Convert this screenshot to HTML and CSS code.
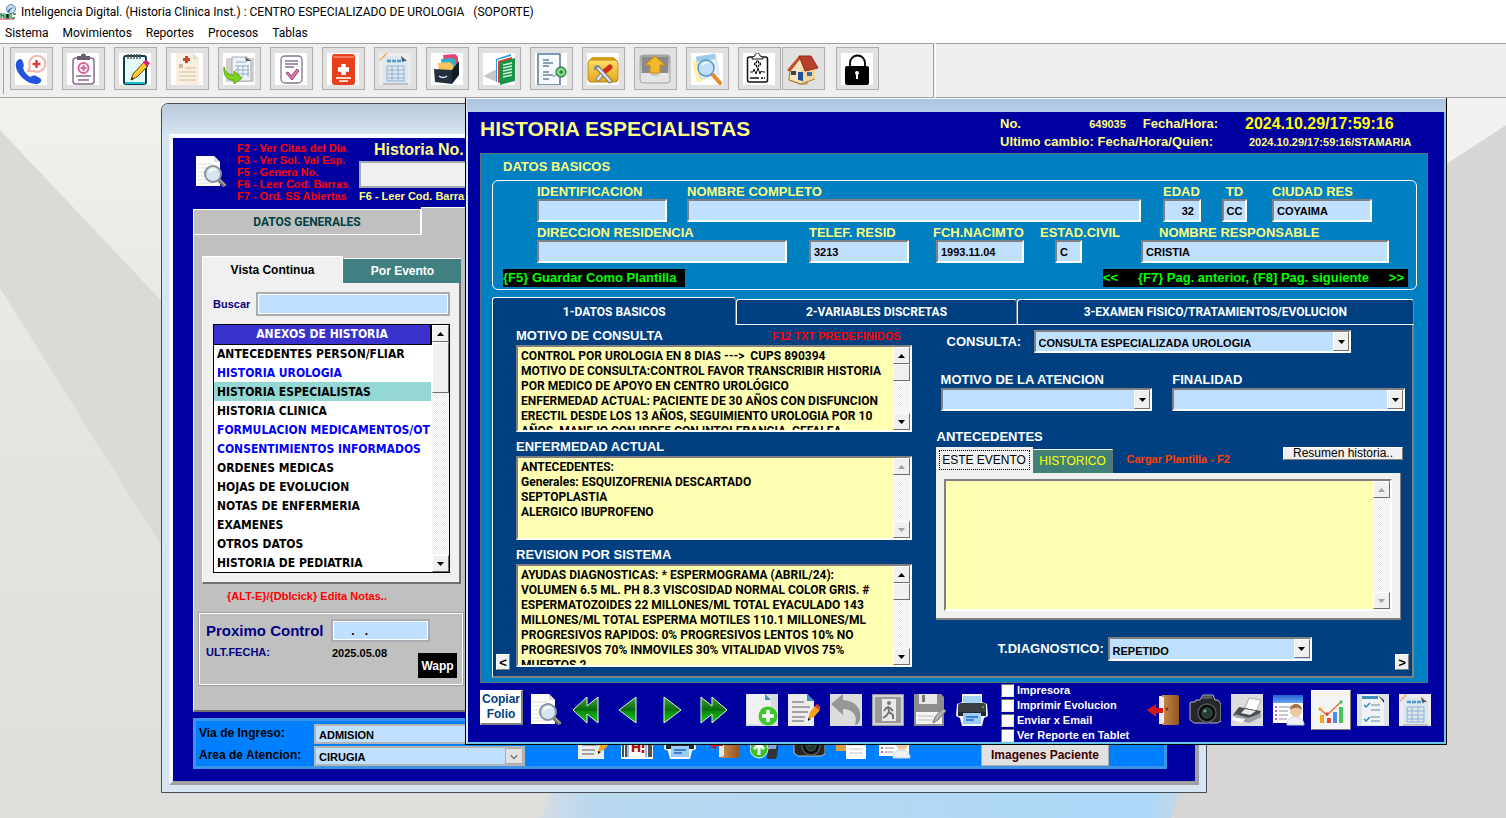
FILE: index.html
```html
<!DOCTYPE html>
<html lang="es">
<head>
<meta charset="utf-8">
<title>Inteligencia Digital</title>
<link rel="stylesheet" href="styles.css">
</head>
<body>
<svg width="0" height="0" class="defs" aria-hidden="true">
  <defs>
    <linearGradient id="gGreen" x1="0" y1="0" x2="0" y2="1"><stop offset="0" stop-color="#3fa53f"/><stop offset=".5" stop-color="#0a6a0a"/><stop offset=".55" stop-color="#0c8a0c"/><stop offset="1" stop-color="#12d012"/></linearGradient>
    <linearGradient id="gGold" x1="0" y1="0" x2="0" y2="1"><stop offset="0" stop-color="#ffe066"/><stop offset="1" stop-color="#e0a51a"/></linearGradient>
    <linearGradient id="gSilver" x1="0" y1="0" x2="0" y2="1"><stop offset="0" stop-color="#a2a2a2"/><stop offset="1" stop-color="#dadada"/></linearGradient>
    <linearGradient id="gBlue" x1="0" y1="0" x2="0" y2="1"><stop offset="0" stop-color="#1f5fd0"/><stop offset="1" stop-color="#6aa5f5"/></linearGradient>
    <linearGradient id="gDoor" x1="0" y1="0" x2="1" y2="0"><stop offset="0" stop-color="#c98a4e"/><stop offset="1" stop-color="#94561f"/></linearGradient>
  </defs>
  <symbol id="i-up" viewBox="0 0 7 4"><path d="M0 4 3.500 0 7 4z" fill="currentColor"/></symbol>
  <symbol id="i-down" viewBox="0 0 7 4"><path d="M0 0h7L3.500 4z" fill="currentColor"/></symbol>
  <symbol id="i-chev" viewBox="0 0 10 6"><path d="M1 1l4 4 4-4" fill="none" stroke="#555" stroke-width="1.300"/></symbol>
  <symbol id="i-lens" viewBox="0 0 32 32"><path d="M1 0h18l6 6v24H1z" fill="#fff"/><path d="M19 0v6h6z" fill="#dcdcdc"/><path d="M3 8h15M3 12h10M3 16h8M3 20h7M3 24h9M3 27h14" stroke="#ddd"/><path d="M23 23l7 7" stroke="#777" stroke-width="4"/><path d="M24 23l7 7" stroke="#bbb" stroke-width="1"/><circle cx="18" cy="18" r="8" fill="#cfe0f2" fill-opacity=".85" stroke="#8a9199" stroke-width="2"/><path d="M13 17c1-4 6-6 9-3-4 0-6 1-9 3z" fill="#fff"/></symbol>
  <symbol id="i-phone" viewBox="0 0 32 32"><path d="M3 7c2-2 4-1 5 2s1 4 0 6c1 4 4 7 7 9 2-1 4-2 6-1l4 2c3 3 0 6-4 6C10 31-1 18 1 10c0-1 1-2 2-3z" fill="#2453dd"/><path d="M13 18l2-4a8 8 0 1 1 4 4z" fill="#fff" stroke="#f2b5b5" stroke-width="2"/><path d="M21.500 7v8M17.500 11h8" stroke="#e23b3b" stroke-width="2.500"/></symbol>
  <symbol id="i-clip" viewBox="0 0 32 32"><rect x="6" y="5" width="21" height="26" rx="3" fill="#fff" stroke="#876a8c" stroke-width="1.500"/><path d="M10 3h4a2 2 0 0 1 5 0h4v4H10z" fill="#6b5b73"/><circle cx="16.500" cy="15" r="5" fill="#fff" stroke="#d8629c" stroke-width="2"/><path d="M16.500 12v6M13.500 15h6" stroke="#d8629c" stroke-width="2"/><path d="M9 23h15M11 27h11" stroke="#876a8c" stroke-width="1.500"/></symbol>
  <symbol id="i-note" viewBox="0 0 32 32"><rect x="5" y="3" width="22" height="28" rx="2" fill="#e8fbfb" stroke="#0b3e4a" stroke-width="2"/><path d="M6 30h20" stroke="#22b8cf" stroke-width="2"/><path d="M9 1v5M12 1v5M15 1v5M18 1v5M21 1v5" stroke="#555" stroke-width="1.500"/><path d="M12 27l2-6L25 9l4 4-11 11z" fill="#ffc928" stroke="#5b4a12"/><path d="M24 9l3-2 4 3-3 4z" fill="#e5147e"/><path d="M12 27l1-3 2 2z" fill="#222"/></symbol>
  <symbol id="i-med" viewBox="0 0 32 32"><path d="M5 0h17l6 6v26H5z" fill="#f9efe3"/><path d="M22 0v6h6z" fill="#ead9c6"/><path d="M15.500 3v7M12 6.500h7" stroke="#d4412a" stroke-width="3"/><path d="M8 13h4" stroke="#d8b795" stroke-width="4"/><path d="M14 15h11M8 19h17M8 23h17M8 27h17" stroke="#e3cbb0" stroke-width="1.300"/></symbol>
  <symbol id="i-sheet" viewBox="0 0 32 32"><path d="M0 0h32v32H0z" fill="#ececec"/><path d="M4 3h19l6 5v22H4z" fill="#dfe6ec"/><path d="M4 30h25v2H4z" fill="#c2c2c2"/><path d="M8 8h17" stroke="#4b9bcb" stroke-width="2.500" stroke-dasharray="4 1"/><path d="M8 13h17M8 17h17M8 21h17M8 25h17M8 13v15M13 13v15M19 13v15M25 13v15M8 28h17" stroke="#8fb2d4" fill="none"/><path d="M22 3l6 5h-5z" fill="#50555c"/><path d="M1 7l7-7" stroke="#e0a85c" stroke-width="2" stroke-dasharray="2 1"/></symbol>
  <symbol id="i-import" viewBox="0 0 32 32"><path d="M3 5h28v24H3z" fill="#d0d0d0"/><path d="M9 4h15l4 4v20H9z" fill="#f0f3f6" stroke="#aaa"/><path d="M13 9h11M12 13h14M12 17h14M12 21h14M15 12v12M20 12v12M25 12v12" stroke="#91adc9"/><path d="M22 4l6 4h-5z" fill="#555"/><path d="M1 14c2 7 6 8 10 8v-4l8 7-8 6v-4C5 28 0 23 1 14z" fill="#7ed321" stroke="#5aa80f"/></symbol>
  <symbol id="i-check" viewBox="0 0 32 32"><rect x="6" y="3" width="21" height="27" rx="4" fill="#fff" stroke="#8a7291" stroke-width="1.300"/><path d="M10 8h13M10 11h13M10 14h9" stroke="#8a7291" stroke-width="1.300"/><path d="M11 20l2-1 3 4 6-7 2 2-7 9z" fill="#e074ae" stroke="#8a4873"/></symbol>
  <symbol id="i-book" viewBox="0 0 32 32"><rect x="5" y="1" width="23" height="31" rx="3" fill="#e8401f"/><path d="M6 4h21" stroke="#f8b4a4"/><path d="M16.500 11v11M11 16.500h11" stroke="#fff" stroke-width="4.500"/><path d="M9 25h15M12 28h9" stroke="#fff" stroke-width="1.500"/></symbol>
  <symbol id="i-files" viewBox="0 0 32 32"><path d="M12 2l12-1 3 3v12l-13 2z" fill="#e84270"/><path d="M10 6l12-1 3 3v10l-13 3z" fill="#26b3c9"/><path d="M7 10l12-1 3 3v8L8 22z" fill="#f7c35f"/><path d="M3 16l18 1v14L4 29z" fill="#22303d"/><path d="M21 17l7-9v14l-7 9z" fill="#121b25"/><path d="M8 23c2 2 6 2 8 0" stroke="#ddd" stroke-width="1.500" fill="none"/></symbol>
  <symbol id="i-folders" viewBox="0 0 32 32"><path d="M0 23l14-7v13z" fill="#c7c7c7"/><path d="M13 6l15-5v22l-15 6z" fill="#2d9fe0"/><path d="M14 7l14-4v22l-14 5z" fill="#fff"/><path d="M15 8l14-4v22l-14 4z" fill="#ea3a2f"/><path d="M17 9l15-4v23l-15 4z" fill="#159447"/><path d="M20 12l9-2M20 15l9-2M20 18l9-2M20 21l9-2M20 24l9-2" stroke="#d5f3dc" stroke-width="1.500"/></symbol>
  <symbol id="i-report" viewBox="0 0 32 32"><path d="M3 1h22v31H3z" fill="#f6faff" stroke="#55789c" stroke-width="1.500"/><path d="M8 7h6M8 10h10M8 13h6M8 19h6M8 22h10M8 26h6" stroke="#6d8295" stroke-width="1.500"/><path d="M18 24l4-3" stroke="#55789c"/><circle cx="26" cy="19" r="5" fill="#7ad97a" stroke="#3a7e5c" stroke-width="1.300"/><circle cx="26" cy="19" r="1.500" fill="#2d6b52"/></symbol>
  <symbol id="i-tools" viewBox="0 0 32 32"><path d="M3 8q0-4 4-4h18q4 0 4 4z" fill="#d9a018"/><rect x="1" y="7" width="30" height="22" rx="3" fill="url(#gGold)" stroke="#b98712"/><path d="M11 26l5-6" stroke="#8a8a8a" stroke-width="4.500" stroke-linecap="round"/><path d="M11 26l5-6" stroke="#e2e2e2" stroke-width="2.500" stroke-linecap="round"/><path d="M17 19l6-5" stroke="#d3281f" stroke-width="5" stroke-linecap="round"/><path d="M11 15l12 13" stroke="#777" stroke-width="4.500" stroke-linecap="round"/><path d="M11 15l12 13" stroke="#dfe1e3" stroke-width="2.500" stroke-linecap="round"/><path d="M8 17c-1-3 2-5 4-3" fill="none" stroke="#888" stroke-width="2"/></symbol>
  <symbol id="i-upload" viewBox="0 0 32 32"><rect x="1" y="2" width="30" height="28" rx="3" fill="url(#gSilver)" stroke="#aaa"/><rect x="3" y="4" width="26" height="16" fill="#8a8a8a"/><path d="M2 20h10v3h8v-3h10v9H2z" fill="#e4e4e4"/><path d="M16 3l10 9h-5v8H11v-8H6z" fill="#f5b72a" stroke="#c98a13"/></symbol>
  <symbol id="i-find" viewBox="0 0 32 32"><path d="M1 8l13-4 5 20-13 6z" fill="#fff2a8"/><path d="M5 4l19-3 4 20-18 5z" fill="#e8f2fb" stroke="#c5d8e8"/><path d="M5 4l19-3 1 5-19 3z" fill="#9ccbe9"/><path d="M22 22l7 8" stroke="#e38a29" stroke-width="4" stroke-linecap="round"/><circle cx="15" cy="15" r="8" fill="#bfe0f8" stroke="#5b93c5" stroke-width="1.500"/><path d="M10 13c2-4 6-5 9-3-4 0-6 1-9 3z" fill="#fff"/></symbol>
  <symbol id="i-vital" viewBox="0 0 32 32"><rect x="4.500" y="4" width="20" height="25" rx="2" fill="#fff" stroke="#111" stroke-width="1.500"/><path d="M9 6c0-2 2-3 3-3 0-4 5-4 5 0 1 0 3 1 3 3z" fill="#fff" stroke="#111"/><path d="M13.500 8h2v2h2v2h-2v2h-2v-2h-2v-2h2z" fill="#fff" stroke="#111"/><path d="M7 19h3l1-3 2 5 2-6 2 6 1-3 2 1h2" fill="none" stroke="#111"/><path d="M7 25h9M18 25h2M21 25h1" stroke="#111" stroke-width="1.500"/></symbol>
  <symbol id="i-home" viewBox="0 0 32 32"><path d="M3 17L13 5l7 12v14l-7 0L2 27z" fill="#f9e3bd" stroke="#a87440"/><path d="M14 17l14-3v12l-14 5z" fill="#f0d3a0"/><path d="M0 17L12 3l2 2L3 19z" fill="#c2502a"/><path d="M12 3l12 0 7 12-13 3z" fill="#b9412a" stroke="#8f2e1b"/><path d="M4 18h5v4H4z" fill="#345"/><path d="M11 19h5v9l-5-1z" fill="#1f4f96"/><path d="M20 19h5v4h-5z" fill="#3c6d9a"/><path d="M2 27l12 4 14-5" stroke="#a1843c" fill="none"/></symbol>
  <symbol id="i-lock" viewBox="0 0 32 32"><path d="M9 14V10a7.500 7.500 0 0 1 15 0v4" fill="none" stroke="#000" stroke-width="1.800"/><rect x="4" y="13" width="24" height="19" rx="2"/><circle cx="16" cy="20" r="2" fill="#fff"/><path d="M16 20v6" stroke="#fff" stroke-width="2"/></symbol>
  <symbol id="i-first" viewBox="0 0 32 32"><path d="M1 16L15 3v9l11-9v26l-11-9v9z" fill="url(#gGreen)" stroke="#dff5df" stroke-width="1"/></symbol>
  <symbol id="i-prev" viewBox="0 0 32 32"><path d="M5 16L22 3v26z" fill="url(#gGreen)" stroke="#dff5df" stroke-width="1"/></symbol>
  <symbol id="i-next" viewBox="0 0 32 32"><path d="M25 16L8 3v26z" fill="url(#gGreen)" stroke="#dff5df" stroke-width="1"/></symbol>
  <symbol id="i-last" viewBox="0 0 32 32"><path d="M29 16L14 3v9L3 3v26l11-9v9z" fill="url(#gGreen)" stroke="#dff5df" stroke-width="1"/></symbol>
  <symbol id="i-add" viewBox="0 0 32 32"><path d="M0 0h32v32H0z" fill="#d8dcdd"/><path d="M1 0h18l6 6v24H1z" fill="#eff0f0"/><path d="M19 0l6 6h-6z" fill="#3c8fc0"/><circle cx="22" cy="22" r="9.500" fill="#3fc52e"/><path d="M22 16v12M16 22h12" stroke="#fff" stroke-width="3.500"/></symbol>
  <symbol id="i-edit" viewBox="0 0 32 32"><path d="M0 0h19l7 7v25H0z" fill="#ececec"/><path d="M19 0l7 7h-7z" fill="#3c8fc0"/><path d="M4 8h12M4 13h18M4 18h16M4 23h13M4 27h12" stroke="#8b8b8b" stroke-width="1.500"/><path d="M20 25l2-7 5-6 5 4-6 7z" fill="#f5a11c"/><path d="M27 12l2-2 4 3-2 3z" fill="#e3402f"/><path d="M20 27v-3l3 1z" fill="#111"/></symbol>
  <symbol id="i-undo" viewBox="0 0 32 32"><path d="M0 0h32v32H0z" fill="#dcdcdc"/><path d="M1 10L13 0v6c13 1 19 9 17 20-1 3-3 5-5 5 3-9-2-16-12-16v6z" fill="#969696"/></symbol>
  <symbol id="i-exit" viewBox="0 0 32 32"><path d="M0 0h32v32H0z" fill="#9a9a9a"/><path d="M2 2h28v28H2z" fill="none" stroke="#e5e5e5" stroke-width="1.500"/><path d="M10 5h14v22H10z" fill="#e9e9e9"/><circle cx="17" cy="9" r="2" fill="#777"/><path d="M16 12l1 6 4 3v4M17 18l-3 4-3 2M12 17l2-3 4 0 3 3" fill="none" stroke="#777" stroke-width="2"/></symbol>
  <symbol id="i-save" viewBox="0 0 32 32"><path d="M0 0h27l3 3v29H0z" fill="#8e8e8e"/><path d="M5 0h18v10H5z" fill="#e7e7e7"/><path d="M8 1h3v7H8z" fill="#777"/><path d="M2 18h26v12H2z" fill="#f5f5f5"/><path d="M4 22h15M4 26h15" stroke="#bbb"/><path d="M19 29l2-6 8-9 3 3-8 9z" fill="#b0b0b0" stroke="#777"/></symbol>
  <symbol id="i-print" viewBox="0 0 32 32"><path d="M6 0h20v8l5 2 1 12-4 2-2 8H6l-2-8-4-2 1-12 5-2z" fill="#f5f8fb"/><path d="M7 2h18v9H7z" fill="#a5d2f5"/><path d="M2 12q0-3 3-3h22q3 0 3 3v10H2z" fill="#3c4045"/><path d="M2 18h28v4H2z" fill="#26292c"/><circle cx="27" cy="13" r="1" fill="#35d05d"/><path d="M7 19h18v11H7z" fill="#9bcdf8"/><path d="M10 23h12M10 26h8" stroke="#1a68c9" stroke-width="1.500"/></symbol>
  <symbol id="i-door" viewBox="0 0 32 32"><path d="M12 2h20v28H12z" fill="#f3e9dd"/><path d="M15 1h15q2 0 2 2v26q0 2-2 2H15z" fill="url(#gDoor)"/><path d="M12 3h5v26l-5 1z" fill="#e7ebee"/><circle cx="20" cy="15" r="1.500" fill="#7e2c14"/><path d="M0 16l9-6v4h7v5H9v4z" fill="#d41616"/></symbol>
  <symbol id="i-camera" viewBox="0 0 32 32"><path d="M2 8h4l1-2h4l3-5h10l2 5h3l3 4v17l-4 2H5l-4-3V9z" fill="#25282b" stroke="#dedede" stroke-width=".8"/><path d="M13 2h10v3H13z" fill="#555"/><circle cx="18" cy="19" r="9" fill="#0b0c0d" stroke="#555" stroke-width="1.500"/><circle cx="18" cy="19" r="5" fill="#233a35" stroke="#4d5d5a"/><circle cx="16" cy="17" r="1.500" fill="#7ea39b"/></symbol>
  <symbol id="i-scan" viewBox="0 0 32 32"><path d="M0 0h32v32H0z" fill="#dcdcdc"/><path d="M14 14l4-10 12 2-5 12z" fill="#fff" stroke="#aaa"/><path d="M8 13l22 4-2 4-18 5-8-5z" fill="#4a4e52"/><path d="M14 15l11 2-6 4-9-2z" fill="#e8ebed"/><path d="M4 20l14 4 12-5v4l-12 6-14-4z" fill="#9aa0a4"/><path d="M2 23l12 2-3 4-10-3z" fill="#f8f8f8"/></symbol>
  <symbol id="i-person" viewBox="0 0 32 32"><path d="M0 1h30v28H0z" fill="#fff"/><path d="M0 1h30v8H0z" fill="url(#gBlue)"/><path d="M2 13h2M2 17h2M2 21h2M2 25h2" stroke="#c314a8" stroke-width="1.500"/><path d="M6 13h12M6 17h9M6 21h9M6 25h8" stroke="#8d8d9b"/><path d="M14 31c0-6 4-8 8-8s9 2 9 8z" fill="#eef2f6" stroke="#ccd3da"/><circle cx="23" cy="17" r="6" fill="#ecc9a4"/><path d="M17 16c0-8 12-8 12 0-3-3-8-3-12 0z" fill="#a57343"/></symbol>
  <symbol id="i-chart" viewBox="0 0 32 32"><path d="M5 21h4v8H5z" fill="#f5a623"/><path d="M12 24h4v5h-4z" fill="#e8443a"/><path d="M18 18h4v11h-4z" fill="#4a90e2"/><path d="M24 13h4v16h-4z" fill="#4cc35a"/><path d="M5 15l7 6 14-13" fill="none" stroke="#e8703a" stroke-width="1.500"/><circle cx="5" cy="15" r="1.700" fill="#f5a623"/><circle cx="12" cy="20" r="1.700" fill="#e8443a"/><circle cx="26" cy="8" r="1.700" fill="#4cc35a"/></symbol>
  <symbol id="i-list" viewBox="0 0 32 32"><path d="M0 0h32v32H0z" fill="#dde2e6"/><path d="M5 1h18l4 5v25H5z" fill="#f0f3f5"/><path d="M5 2h16v3H5z" fill="#3f8db9"/><path d="M21 1l6 5v3z" fill="#303a42"/><path d="M14 11h9M14 16h9M14 23h9M14 27h9" stroke="#8cafc6" stroke-width="1.300"/><path d="M7 11l2 2 4-4M7 25l2 2 4-4" fill="none" stroke="#2f86bb" stroke-width="1.500"/></symbol>
  <symbol id="i-bar" viewBox="0 0 32 32"><path d="M0 0h32v32H0z" fill="#fff"/><path d="M2 2v28M5 2v28M28 2v28M30 2v28" stroke="#161616" stroke-width="1.500"/><path d="M7 2v28M25 2v28" stroke="#2a72d0"/><path d="M12 14v11M18 14v11M12 20h6M22 18v3M22 23v3" stroke="#b01515" stroke-width="2.500"/></symbol>
  <symbol id="i-copy" viewBox="0 0 32 32"><path d="M0 4h22v20H0z" fill="#d8a04a"/><path d="M10 8h20v24H10z" fill="#fff"/><path d="M13 14h14M13 18h14M13 22h14M13 26h14" stroke="#bcc2c8"/></symbol>
  <symbol id="i-device" viewBox="0 0 32 32"><path d="M19 4h9q3 0 2 3l-3 22q0 3-3 3h-7z" fill="#30343a"/><path d="M20 7h8l-2 15h-8z" fill="#8ba6d9"/><circle cx="9" cy="22" r="9" fill="#39c12a" stroke="#e4f7e0"/><path d="M9 28V18M4 22l5-5 5 5" fill="none" stroke="#fff" stroke-width="3"/></symbol>
  <symbol id="i-app" viewBox="0 0 16 16"><circle cx="11" cy="5" r="4.500" fill="#c7dcee" stroke="#5b88b0"/><path d="M7 8c2-4 5-5 7-4-3 0-4 2-5 5z" fill="#2f6ba8"/><path d="M1 9v5M4 9v5M1 9l3 5M6 10v4h3v-4M11 9v5M13 10h3M12 14h3" stroke="#27804b" stroke-width="1.300"/><path d="M0 15h14" stroke="#bb3434"/></symbol>
</svg>

<header class="app-title"><svg class="app-icon"><use href="#i-app"/></svg><h1>Inteligencia Digital. (Historia Clinica Inst.) : CENTRO ESPECIALIZADO DE UROLOGIA &nbsp; (SOPORTE)</h1></header>
<nav class="menu">
  <button>Sistema</button><button>Movimientos</button><button>Reportes</button><button>Procesos</button><button>Tablas</button>
</nav>
<div class="toolbar">
  <div class="tools">
    <span class="grip"></span>
    <button class="tool" aria-label="Llamadas"><svg><use href="#i-phone"/></svg></button>
    <button class="tool" aria-label="Historia"><svg><use href="#i-clip"/></svg></button>
    <button class="tool" aria-label="Notas"><svg><use href="#i-note"/></svg></button>
    <button class="tool" aria-label="Formulas"><svg><use href="#i-med"/></svg></button>
    <button class="tool" aria-label="Importar"><svg><use href="#i-import"/></svg></button>
    <button class="tool" aria-label="Verificar"><svg><use href="#i-check"/></svg></button>
    <button class="tool" aria-label="Manual"><svg><use href="#i-book"/></svg></button>
    <button class="tool" aria-label="Planilla"><svg><use href="#i-sheet"/></svg></button>
    <button class="tool" aria-label="Archivo"><svg><use href="#i-files"/></svg></button>
    <button class="tool" aria-label="Carpetas"><svg><use href="#i-folders"/></svg></button>
    <button class="tool" aria-label="Informe"><svg><use href="#i-report"/></svg></button>
    <button class="tool" aria-label="Herramientas"><svg><use href="#i-tools"/></svg></button>
    <button class="tool plain" aria-label="Subir"><svg><use href="#i-upload"/></svg></button>
    <button class="tool" aria-label="Buscar documentos"><svg><use href="#i-find"/></svg></button>
    <span class="pair"><button class="tool" aria-label="Signos vitales"><svg><use href="#i-vital"/></svg></button><button class="tool plain" aria-label="Inicio"><svg><use href="#i-home"/></svg></button></span>
    <button class="tool" aria-label="Bloquear"><svg><use href="#i-lock"/></svg></button>
  </div>
  <div class="tools-rest"></div>
</div>

<main class="desktop">
  <svg class="wallpaper" viewBox="0 0 1506 720" preserveAspectRatio="none" aria-hidden="true">
    <defs>
      <linearGradient id="wBase" x1="0" y1="0" x2="0" y2="1"><stop offset="0" stop-color="#f2f1ee"/><stop offset=".4" stop-color="#e6e5e2"/><stop offset="1" stop-color="#e0deda"/></linearGradient>
      <linearGradient id="wBlue" x1="0" y1="0" x2="1" y2="0"><stop offset="0" stop-color="#d5dde3"/><stop offset=".08" stop-color="#b9d8ee"/><stop offset=".95" stop-color="#acd8f8"/><stop offset="1" stop-color="#c3d8e8"/></linearGradient>
    </defs>
    <path d="M0 0h1506v720H0z" fill="url(#wBase)"/>
    <path d="M0 32l170 180v250L0 190z" fill="#dcdad7"/>
    <path d="M1180 240L1506 27v693H1174z" fill="#d7d6d5"/>
    <path d="M1206 0h300v27l-300 195z" fill="#f1f1f0"/>
    <path d="M555 690h625l-8 30H540z" fill="url(#wBlue)"/>
  </svg>

  <section class="win win-back">
    <div class="win-caption tall"></div>
    <div class="back-body">
      <div class="back-head">
        <svg class="ic"><use href="#i-lens"/></svg>
        <ul class="hints"><li>F2 - Ver Citas del Dia</li><li>F3 - Ver Sol. Val Esp.</li><li>F5 - Genera No.</li><li>F6 - Leer Cod. Barras</li><li>F7 - Ord. SS Abiertas</li></ul>
        <div class="hist-no"><label for="hno">Historia No.</label><input id="hno" type="text"><span>F6 - Leer Cod. Barras</span></div>
      </div>
      <div class="gray-tabs"><button class="gray-tab">DATOS GENERALES</button><span class="gray-tab-on"></span></div>
      <div class="gray-area">
        <div class="side">
          <div class="view-tabs"><button class="view-on">Vista Continua</button><button class="view-off">Por Evento</button></div>
          <div class="view-box">
            <div class="search"><label for="bus">Buscar</label><input id="bus" type="text"></div>
            <div class="listbox">
              <table>
                <thead><tr><th>ANEXOS DE HISTORIA</th></tr></thead>
                <tbody>
                  <tr><td>ANTECEDENTES PERSON/FLIAR</td></tr>
                  <tr class="blue"><td>HISTORIA UROLOGIA</td></tr>
                  <tr class="on"><td>HISTORIA ESPECIALISTAS</td></tr>
                  <tr><td>HISTORIA CLINICA</td></tr>
                  <tr class="blue"><td>FORMULACION MEDICAMENTOS/OT</td></tr>
                  <tr class="blue"><td>CONSENTIMIENTOS INFORMADOS</td></tr>
                  <tr><td>ORDENES MEDICAS</td></tr>
                  <tr><td>HOJAS DE EVOLUCION</td></tr>
                  <tr><td>NOTAS DE ENFERMERIA</td></tr>
                  <tr><td>EXAMENES</td></tr>
                  <tr><td>OTROS DATOS</td></tr>
                  <tr><td>HISTORIA DE PEDIATRIA</td></tr>
                </tbody>
              </table>
              <div class="scroll"><button aria-label="Subir lista"><svg><use href="#i-up"/></svg></button><i class="thumb long"></i><button class="end" aria-label="Bajar lista"><svg><use href="#i-down"/></svg></button></div>
            </div>
          </div>
          <p class="alt">{ALT-E}/{Dblcick} Edita Notas..</p>
          <div class="control">
            <div class="control-row"><label for="prox">Proximo Control</label><input id="prox" type="text" value="&nbsp;&nbsp;&nbsp;&nbsp;.&nbsp;&nbsp;&nbsp;."></div>
            <div class="control-row low"><span class="ult">ULT.FECHA:</span><span class="fecha">2025.05.08</span><button class="wapp">Wapp</button></div>
          </div>
        </div>
      </div>
      <div class="ingreso">
        <div class="in-row"><label for="via">Via de Ingreso:</label><select id="via" class="in-sel wide"><option>ADMISION</option></select></div>
        <div class="in-row"><label for="area">Area de Atencion:</label><span class="in-combo"><select id="area" class="in-sel"><option>CIRUGIA</option></select><span class="chev"><svg><use href="#i-chev"/></svg></span></span>
          <span class="in-icons"><svg><use href="#i-edit"/></svg><svg><use href="#i-bar"/></svg><svg><use href="#i-print"/></svg><svg><use href="#i-door"/></svg><svg><use href="#i-device"/></svg><svg><use href="#i-camera"/></svg><svg><use href="#i-copy"/></svg><svg><use href="#i-person"/></svg></span>
          <button class="imagenes">Imagenes Paciente</button></div>
      </div>
    </div>
  </section>

  <section class="win-front">
    <div class="win-caption"></div>
    <div class="front-body">
      <div class="front-head">
        <h2>HISTORIA ESPECIALISTAS</h2>
        <div class="meta">
          <div class="meta-row"><span>No.</span><small>649035</small><span>Fecha/Hora:</span></div><strong>2024.10.29/17:59:16</strong>
          <span>Ultimo cambio: Fecha/Hora/Quien:</span><small class="who">2024.10.29/17:59:16/STAMARIA</small>
        </div>
      </div>

      <div class="panel">
        <h3>DATOS BASICOS</h3>
        <div class="basic">
          <div class="frow">
            <div class="f w130"><label for="ide">IDENTIFICACION</label><input id="ide" type="text"></div>
            <div class="f grow"><label for="nom">NOMBRE COMPLETO</label><input id="nom" type="text"></div>
            <div class="f w38"><label for="eda">EDAD</label><input id="eda" class="num" type="text" value="32"></div>
            <div class="f w25"><label for="td" class="mid">TD</label><input id="td" class="tight" type="text" value="CC"></div>
            <div class="f w100 city"><label for="ciu">CIUDAD RES</label><input id="ciu" type="text" value="COYAIMA"></div>
          </div>
          <div class="frow second">
            <div class="f w250"><label for="dir">DIRECCION RESIDENCIA</label><input id="dir" type="text"></div>
            <div class="f w100"><label for="tel">TELEF. RESID</label><input id="tel" type="text" value="3213"></div>
            <div class="f w91"><label for="fch">FCH.NACIMTO</label><input id="fch" type="text" value="1993.11.04"></div>
            <div class="f w80"><label for="est">ESTAD.CIVIL</label><input id="est" type="text" value="C"></div>
            <div class="f grow resp"><label for="res">NOMBRE RESPONSABLE</label><input id="res" type="text" value="CRISTIA"></div>
          </div>
          <div class="keys"><button>{F5} Guardar Como Plantilla</button><span class="pager"><button>&lt;&lt;</button><span>{F7} Pag. anterior, {F8] Pag. siguiente</span><button>&gt;&gt;</button></span></div>
        </div>

        <div class="tabs"><button class="tab on">1-DATOS BASICOS</button><button class="tab">2-VARIABLES DISCRETAS</button><button class="tab third">3-EXAMEN FISICO/TRATAMIENTOS/EVOLUCION</button></div>
        <div class="page">
          <button class="turn">&lt;</button>
          <div class="left">
            <div class="memo-group">
              <div class="memo-head"><label for="mot">MOTIVO DE CONSULTA</label><em>F12 TXT PREDEFINIDOS</em></div>
              <div class="memo m1"><textarea id="mot" wrap="off">CONTROL POR UROLOGIA EN 8 DIAS ---&gt;  CUPS 890394
MOTIVO DE CONSULTA:CONTROL FAVOR TRANSCRIBIR HISTORIA
POR MEDICO DE APOYO EN CENTRO UROLÓGICO
ENFERMEDAD ACTUAL: PACIENTE DE 30 AÑOS CON DISFUNCION
ERECTIL DESDE LOS 13 AÑOS, SEGUIMIENTO UROLOGIA POR 10
AÑOS, MANEJO CON IPDE5 CON INTOLERANCIA, CEFALEA</textarea><div class="scroll"><button aria-label="Subir"><svg><use href="#i-up"/></svg></button><i class="thumb"></i><button class="end" aria-label="Bajar"><svg><use href="#i-down"/></svg></button></div></div>
            </div>
            <div class="memo-group">
              <div class="memo-head"><label for="enf">ENFERMEDAD ACTUAL</label></div>
              <div class="memo m2"><textarea id="enf" wrap="off">ANTECEDENTES:
Generales: ESQUIZOFRENIA DESCARTADO
SEPTOPLASTIA
ALERGICO IBUPROFENO</textarea><div class="scroll off"><button disabled aria-label="Subir"><svg><use href="#i-up"/></svg></button><button class="end" disabled aria-label="Bajar"><svg><use href="#i-down"/></svg></button></div></div>
            </div>
            <div class="memo-group">
              <div class="memo-head"><label for="rev">REVISION POR SISTEMA</label></div>
              <div class="memo m3"><textarea id="rev" wrap="off">AYUDAS DIAGNOSTICAS: * ESPERMOGRAMA (ABRIL/24):
VOLUMEN 6.5 ML. PH 8.3 VISCOSIDAD NORMAL COLOR GRIS. #
ESPERMATOZOIDES 22 MILLONES/ML TOTAL EYACULADO 143
MILLONES/ML TOTAL ESPERMA MOTILES 110.1 MILLONES/ML
PROGRESIVOS RAPIDOS: 0% PROGRESIVOS LENTOS 10% NO
PROGRESIVOS 70% INMOVILES 30% VITALIDAD VIVOS 75%
MUERTOS 2</textarea><div class="scroll"><button aria-label="Subir"><svg><use href="#i-up"/></svg></button><i class="thumb"></i><button class="end" aria-label="Bajar"><svg><use href="#i-down"/></svg></button></div></div>
            </div>
          </div>
          <div class="right">
            <div class="consulta"><label for="con">CONSULTA:</label><span class="combo"><select id="con"><option>CONSULTA ESPECIALIZADA UROLOGIA</option></select><span class="drop"><svg><use href="#i-down"/></svg></span></span></div>
            <div class="two">
              <div class="c1"><label for="ate">MOTIVO DE LA ATENCION</label><span class="combo"><select id="ate"><option></option></select><span class="drop"><svg><use href="#i-down"/></svg></span></span></div>
              <div class="c2"><label for="fin">FINALIDAD</label><span class="combo"><select id="fin"><option></option></select><span class="drop"><svg><use href="#i-down"/></svg></span></span></div>
            </div>
            <label class="ante" for="ant">ANTECEDENTES</label>
            <div class="ante-tabs"><button class="at-on"><span>ESTE EVENTO</span></button><button class="at-off">HISTORICO</button><em>Cargar Plantilla - F2</em><button class="resumen">Resumen historia..</button></div>
            <div class="ante-box"><div class="memo m4"><textarea id="ant"></textarea><div class="scroll off"><button disabled aria-label="Subir"><svg><use href="#i-up"/></svg></button><button class="end" disabled aria-label="Bajar"><svg><use href="#i-down"/></svg></button></div></div></div>
            <div class="diag"><label for="dia">T.DIAGNOSTICO:</label><span class="combo"><select id="dia"><option>REPETIDO</option></select><span class="drop"><svg><use href="#i-down"/></svg></span></span><button class="turn">&gt;</button></div>
          </div>
        </div>
      </div>

      <div class="actions">
        <button class="copiar">Copiar Folio</button>
        <div class="acts nav">
          <button aria-label="Buscar"><svg><use href="#i-lens"/></svg></button><button aria-label="Primero"><svg><use href="#i-first"/></svg></button><button aria-label="Anterior"><svg><use href="#i-prev"/></svg></button><button aria-label="Siguiente"><svg><use href="#i-next"/></svg></button><button aria-label="Ultimo"><svg><use href="#i-last"/></svg></button>
        </div>
        <div class="acts doc">
          <button aria-label="Nuevo"><svg><use href="#i-add"/></svg></button><button aria-label="Editar"><svg><use href="#i-edit"/></svg></button><button aria-label="Deshacer"><svg><use href="#i-undo"/></svg></button><button aria-label="Salir"><svg><use href="#i-exit"/></svg></button><button aria-label="Guardar"><svg><use href="#i-save"/></svg></button><button aria-label="Imprimir"><svg><use href="#i-print"/></svg></button>
        </div>
        <div class="checks">
          <label><input type="checkbox">Impresora</label><label><input type="checkbox">Imprimir Evolucion</label><label><input type="checkbox">Enviar x Email</label><label><input type="checkbox">Ver Reporte en Tablet</label>
        </div>
        <div class="acts tail">
          <button aria-label="Cerrar"><svg><use href="#i-door"/></svg></button><button aria-label="Camara"><svg><use href="#i-camera"/></svg></button><button aria-label="Escanear"><svg><use href="#i-scan"/></svg></button><button aria-label="Paciente"><svg><use href="#i-person"/></svg></button><button class="raised" aria-label="Graficas"><svg><use href="#i-chart"/></svg></button><button aria-label="Lista"><svg><use href="#i-list"/></svg></button><button aria-label="Tabla"><svg><use href="#i-sheet"/></svg></button>
        </div>
      </div>
    </div>
  </section>
</main>
</body>
</html>
```

FILE: styles.css
```css
* { box-sizing: border-box; }
body { margin: 0; min-height: 100vh; display: flex; flex-direction: column; background: #fff; font: bold 12px/16px "Liberation Sans", Arial, sans-serif; color: #000; }
h1, h2, h3, p, ul { margin: 0; padding: 0; font: inherit; }
ul { list-style: none; }
button, input, select, textarea { font: inherit; color: inherit; margin: 0; padding: 0; border: 0; border-radius: 0; background: none; outline: 0; min-width: 0; }
button { white-space: nowrap; }
select { appearance: none; }
textarea { display: block; resize: none; overflow: hidden; }
em { font-style: normal; }
.defs { position: absolute; }
svg { display: block; }

/* application frame */
.app-title { display: flex; align-items: center; gap: 5px; height: 24px; font: 12px/16px Roboto, sans-serif; }
.app-icon { width: 16px; height: 16px; }
.menu { display: flex; gap: 14px; height: 19px; padding-left: 5px; font: 12px/18px Roboto, sans-serif; }
.menu button { height: 18px; }
.toolbar { display: flex; height: 55px; background: #efefef; }
.tools { display: flex; gap: 9px; padding: 3px 54px 0 3px; border: solid #a0a0a0; border-width: 1px 1px 1px 0; }
.tools-rest { flex: 1; margin-left: 1px; border: solid #a0a0a0; border-width: 1px 0 1px 1px; }
.tools-rest { border-left-color: #fff; }
.grip { width: 1px; height: 47px; margin-right: -3px; background: #a0a0a0; }
.tool { width: 43px; height: 43px; padding: 4px; background: #e1e1e1; border: 1px solid #adadad; }
.tool svg { width: 32px; height: 32px; background: #fff; }
.tool.plain svg { background: none; }
.pair { display: flex; gap: 1px; margin-right: 2px; }
.desktop { position: relative; flex: 1; min-height: 720px; overflow: hidden; }
.wallpaper { width: 100%; height: 100%; position: absolute; }

/* back window */
.win-back { position: absolute; left: 161px; right: 299px; top: 5px; padding: 0 7px 7px; border: 1px solid #444c55; border-radius: 7px 7px 0 0; background: #d7e4f2; }
.win-caption { height: 13px; background: linear-gradient(#a9c3df, #b9cfe8); }
.win-caption.tall { height: 30px; margin: 0 -7px; border-radius: 6px 6px 0 0; background: linear-gradient(#b9c9d8, #d7e4f2); }
.back-body { border: 4px solid; border-color: #fafcff #a0a0a0 #a0a0a0 #f4f7fb; padding: 0 28px 12px 20px; background: #0000a0; }
.back-head { display: flex; height: 69px; color: #ff0000; font-size: 11px; }
.ic { width: 32px; height: 32px; margin: 18px 0 0 2px; }
.hints { margin: 4px 0 0 10px; width: 122px; line-height: 12px; }
.hist-no { display: flex; flex-direction: column; color: #ffff80; }
.hist-no label { font-size: 16px; line-height: 18px; padding: 3px 0 0 15px; margin-bottom: 2px; }
.hist-no input { width: 200px; height: 27px; border: 2px solid #a0a8b8; background: #f0f0f0; }
.gray-tabs { display: flex; align-items: flex-end; height: 28px; }
.gray-tab { width: 228px; height: 26px; background: #c0c0c0; color: #004040; border: 1px solid #fff; font: bold 12px/16px Roboto, sans-serif; }
.gray-tab-on { flex: 1; height: 28px; background: #c0c0c0; border: solid #fff; border-width: 1px 0 0 1px; }
.gray-area { height: 477px; padding: 21px 0 0 5px; background: #c0c0c0; border-left: 1px solid #fff; border-bottom: 2px solid #707070; }
.side { width: 264px; }
.view-tabs { display: flex; align-items: flex-end; height: 27px; margin-left: 3px; width: 259px; }
.view-on { width: 141px; height: 27px; background: #f0f0f0; border: 1px solid #fff; border-bottom: 0; }
.view-off { flex: 1; height: 25px; background: #408080; color: #fff; border-left: 1px solid #707070; border-top: 1px solid #fff; }
.view-box { width: 259px; margin-left: 3px; padding: 9px 9px 9px 10px; background: #f0f0f0; border-right: 2px solid #707070; border-left: 1px solid #fff; border-bottom: 2px solid #707070; }
.search { display: flex; align-items: center; gap: 5px; color: #000080; font-size: 11px; }
.search label { width: 38px; }
.search input { flex: 1; height: 24px; }
.search input, .control input { background: #c0e0ff; border: 2px solid #a8adb3; box-shadow: inset 0 0 0 1px #fff; }
.listbox { display: flex; margin-top: 8px; border: 1px solid #000; background: #fff; }
.listbox table { flex: 1; width: 0; table-layout: fixed; border-collapse: collapse; font: bold 12px/18px "DejaVu Sans Condensed", "Noto Sans", sans-serif; }
.listbox th { height: 19px; padding: 0; background: #3a32cc; color: #fff; border: solid #000; border-width: 0 2px 1px 0; }
.listbox td { height: 19px; padding: 0 0 0 3px; overflow: hidden; white-space: nowrap; }
.blue { color: #0000ff; }
.on td { background: #94d8d4; }
.alt { margin: 4px 0 9px 28px; font-size: 11px; color: #ff0000; }
.control { height: 72px; padding: 5px 5px 5px 6px; border: 1px solid #fff; outline: 1px solid #a0a0a0; color: #000080; }
.control-row { display: flex; align-items: center; }
.control-row label { width: 125px; font-size: 15px; }
.control input { width: 99px; height: 23px; color: #000; padding-left: 5px; }
.low { align-items: flex-start; padding-top: 2px; font-size: 11px; }
.ult { width: 126px; line-height: 16px; }
.fecha { flex: 1; color: #000; line-height: 18px; }
.wapp { width: 39px; height: 25px; margin-top: 9px; background: #000; color: #fff; font-size: 12px; }
.ingreso { margin-top: 6px; padding: 3px; border: 3px solid #3d94e6; background: #0080ff; height: 51px; display: flex; flex-direction: column; gap: 2px; }
.in-row { display: flex; height: 20px; line-height: 18px; }
.in-row label { width: 115px; flex: none; }
.in-sel { width: 211px; height: 20px; padding: 0 3px 2px; border: 2px solid #b4b4b4; background: #c0e0ff; font-size: 11px; }
.in-combo { display: grid; width: 211px; }
.in-combo > * { grid-area: 1 / 1; }
.chev { justify-self: end; width: 18px; height: 16px; margin: 2px; padding: 5px 4px; background: #e1e1e1; border: 1px solid #adadad; pointer-events: none; }
.chev svg { width: 8px; height: 6px; }
.in-icons { display: flex; gap: 11px; margin-left: 53px; align-items: flex-end; height: 13px; }
.in-icons svg { width: 32px; height: 32px; flex: none; }
.imagenes { width: 128px; height: 22px; margin: -2px 52px 0 auto; background: #e1e1e1; border: 1px solid #adadad; color: #400000; }

/* front window */
.win-front { position: absolute; left: 465px; right: 59px; top: 0; border: solid #000; border-width: 0 1px 1px; }
.win-front .win-caption { height: 14px; border-top: 1px solid #fff; border-left: 1px solid #dce9f5; }
.front-body { padding: 0 13px 0 12px; background: #0000a0; border: solid #6cc8ea; border-width: 0 2px 2px; border-left-color: #dce9f5; }
.front-head { display: flex; justify-content: space-between; height: 41px; padding: 3px 3px 0 0; color: #ffff80; }
.front-head h2 { font-size: 21px; line-height: 28px; }
.meta { display: grid; grid-template-columns: 218px auto; grid-auto-rows: 18px; column-gap: 27px; width: 428px; font-size: 13px; line-height: 18px; white-space: nowrap; }
.meta-row { display: flex; }
.meta-row small { flex: 1; text-align: right; padding-right: 17px; }
.meta small { font-size: 11px; }
.meta strong { font-size: 16px; color: #ffff00; }
.meta .who { padding-left: 4px; }
.panel { margin-right: 3px; padding: 6px 11px 4px; background: #0080c0; border: 1px solid #5f6f7c; color: #ffff80; font-size: 13px; }
.panel h3 { line-height: 14px; margin: 0 0 6px 11px; }
.basic { height: 110px; padding: 4px 8px 0 10px; border: 1px solid #fff; border-radius: 6px; margin-right: -1px; }
.frow { display: flex; padding: 0 36px 0 34px; }
.frow.second { margin-top: 4px; padding-right: 19px; }
.f { display: flex; flex-direction: column; line-height: 14px; white-space: nowrap; }
.f input { width: 100%; height: 23px; padding: 0 3px; background: #c0e0ff; border: 2px solid; border-color: #808080 #fff #fff #808080; color: #000; font-size: 11px; }
.f .num { text-align: right; padding-right: 5px; }
.f .tight { text-align: center; padding: 0; }
.mid { text-align: center; }
.grow { flex: 1; }
.w130 { width: 130px; margin-right: 20px; }
.w38 { width: 38px; margin: 0 21px 0 22px; }
.w25 { width: 25px; margin-right: 25px; }
.w100 { width: 100px; }
.w250 { width: 250px; margin-right: 22px; }
.w91 { width: 91px; margin: 0 16px 0 24px; }
.f.w91 input { width: 88px; align-self: flex-end; }
.w80 { width: 80px; margin-right: 21px; }
.f.w80 input { width: 27px; margin-left: 15px; }
.resp label { padding-left: 18px; }
.keys { display: flex; justify-content: space-between; margin-top: 6px; color: #00ff00; line-height: 18px; }
.keys > * { background: #000; }
.keys > button { width: 182px; text-align: left; }
.pager { display: flex; justify-content: space-between; width: 305px; padding-right: 4px; white-space: nowrap; }
.tabs { display: flex; align-items: flex-end; height: 28px; margin: 7px 2px 0 0; color: #fff; }
.tab { height: 26px; flex: 280 1 0; background: #004080; border: 1px solid #fff; border-right-color: #808080; border-radius: 3px 3px 0 0; font: bold 12px/16px Roboto, sans-serif; }
.tab.on { height: 28px; flex-grow: 244; border-bottom: 0; }
.tab.third { flex-grow: 398; }
.page { display: flex; margin-right: 2px; padding: 3px 3px 6px; background: #004080; border: solid #808080; border-width: 0 2px 2px 1px; border-left-color: #fff; color: #fff; }
.turn { align-self: flex-end; flex: none; width: 14px; height: 16px; background: #f0f0f0; border: 1px solid; border-color: #fff #808080 #808080 #fff; color: #000; line-height: 13px; }
.left { flex: 396 1 0; min-width: 0; margin: 0 24px 0 6px; display: flex; flex-direction: column; gap: 7px; }
.memo-head { display: flex; justify-content: space-between; margin-bottom: 1px; }
.memo-head em { padding-right: 11px; font-size: 11px; color: #ff0000; }
.memo { display: flex; border: 2px solid; border-color: #808080 #fff #fff #808080; background: #ffffb3; }
.memo textarea { flex: 1; padding: 2px 3px; color: #000; font: bold 12px/15px Roboto, sans-serif; white-space: pre; }
.m1 { height: 87px; }
.m2 { height: 84px; }
.m3 { height: 103px; }
.m4 { height: 132px; }
.scroll { display: flex; flex-direction: column; flex: none; width: 17px; background: repeating-conic-gradient(#fff 0 25%, #ececec 0 50%) 0 0 / 2px 2px; }
.scroll button, .thumb, .drop { width: 17px; height: 17px; background: #f0f0f0; border: 1px solid; border-color: #fff #6d6d6d #6d6d6d #fff; color: #000; display: grid; place-items: center; }
.scroll svg, .drop svg { width: 7px; height: 4px; }
.scroll.off button { color: #a0a0a0; }
.scroll .end { margin-top: auto; }
.thumb.long { height: 51px; }
.right { flex: 474 1 0; min-width: 0; padding-top: 2px; display: flex; flex-direction: column; }
.combo { display: flex; height: 23px; border: 2px solid; border-color: #808080 #fff #fff #808080; background: #c0e0ff; }
.combo select { flex: 1; padding: 0 3px 2px; color: #000; font-size: 11px; }
.drop { width: 16px; height: 19px; flex: none; pointer-events: none; }
.consulta { display: flex; padding: 0 58px 0 11px; line-height: 23px; }
.consulta label { width: 87px; }
.consulta .combo { flex: 1; }
.two { display: flex; gap: 20px; margin-top: 19px; padding: 0 4px 0 5px; }
.c1 { flex: 212 1 0; }
.c2 { flex: 233 1 0; }
.c1 label, .c2 label { display: block; }
.ante { margin: 18px 0 2px 1px; }
.ante-tabs { display: flex; align-items: flex-end; height: 26px; padding-right: 6px; font-weight: normal; }
.at-on { width: 97px; height: 26px; background: #f0f0f0; color: #000; font-size: 12px; padding: 3px; }
.at-on span { display: block; border: 1px dotted #000; line-height: 18px; }
.at-off { width: 80px; height: 24px; background: #408078; color: #ffff00; font-size: 12px; border: 1px solid; border-color: #fff #707070 #408078 #707070; }
.ante-tabs em { margin-left: 14px; line-height: 28px; font-size: 11px; font-weight: bold; color: #ff4000; }
.resumen { align-self: flex-start; margin-left: auto; width: 120px; height: 13px; overflow: hidden; background: #f0f0f0; border: 1px solid; border-color: #fff #808080 #808080 #fff; color: #000; font-size: 12px; line-height: 11px; }
.ante-box { margin-right: 8px; padding: 6px 8px 7px; background: #f0f0f0; border: solid #808080; border-width: 0 1px 2px 0; }
.diag { display: flex; margin-top: 17px; padding-left: 62px; line-height: 24px; }
.diag label { width: 110px; }
.diag .combo { width: 204px; height: 24px; }
.diag .turn { margin: 17px 0 0 auto; }

/* action bar */
.actions { display: flex; height: 59px; color: #fff; }
.copiar { width: 43px; height: 35px; margin-top: 7px; white-space: normal; background: #fff; color: #004080; border: 1px solid; border-color: #fff #808080 #808080 #fff; line-height: 15px; border-width: 1px 2px 2px 1px; }
.acts { display: flex; gap: 10px; padding-top: 11px; }
.acts svg { width: 32px; height: 32px; }
.acts button { height: 32px; }
.nav { margin-left: 7px; }
.doc { margin-left: auto; }
.checks { display: flex; flex-direction: column; width: 142px; margin-left: 13px; font-size: 11px; line-height: 15px; white-space: nowrap; }
.checks label { display: flex; gap: 3px; align-items: center; height: 15px; }
.checks input { appearance: none; width: 13px; height: 13px; background: #fff; border: 1px solid; border-color: #6d6d6d #e8e8e8 #e8e8e8 #6d6d6d; }
.tail { margin-left: 4px; }
.acts .raised { width: 40px; height: 40px; margin: -4px -4px 0; padding: 3px; background: #f4f4f4; border: 1px solid; border-color: #fff #808080 #808080 #fff; }
```
